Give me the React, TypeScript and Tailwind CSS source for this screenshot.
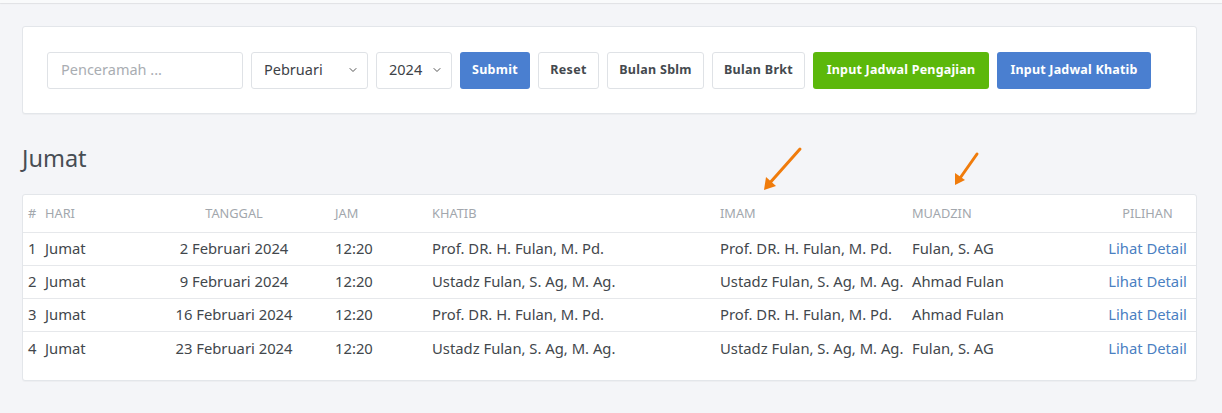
import { ChevronDown } from "lucide-react";

const rows = [
  { no: 1, tgl: "2 Februari 2024", khatib: "Prof. DR. H. Fulan, M. Pd.", imam: "Prof. DR. H. Fulan, M. Pd.", muadzin: "Fulan, S. AG" },
  { no: 2, tgl: "9 Februari 2024", khatib: "Ustadz Fulan, S. Ag, M. Ag.", imam: "Ustadz Fulan, S. Ag, M. Ag.", muadzin: "Ahmad Fulan" },
  { no: 3, tgl: "16 Februari 2024", khatib: "Prof. DR. H. Fulan, M. Pd.", imam: "Prof. DR. H. Fulan, M. Pd.", muadzin: "Ahmad Fulan" },
  { no: 4, tgl: "23 Februari 2024", khatib: "Ustadz Fulan, S. Ag, M. Ag.", imam: "Ustadz Fulan, S. Ag, M. Ag.", muadzin: "Fulan, S. AG" },
];

function Select({ value, width }: { value: string; width: string }) {
  return (
    <div className={`flex h-[37px] items-center justify-between rounded-[3px] border border-[#dfe2e6] bg-white pl-[12px] pr-[8px] text-[14.5px] text-[#3d4247] ${width}`}>
      <span>{value}</span>
      <ChevronDown className="h-[12px] w-[12px] text-[#555]" strokeWidth={2} />
    </div>
  );
}

export default function App() {
  return (
    <div className="relative min-h-[413px] bg-[#f4f5f8] font-['Noto_Sans',sans-serif]">
      <div className="h-[3px] bg-[#f9fafb] shadow-[0_1px_1px_rgba(0,0,0,0.08)]" />

      <div className="pl-[22px] pr-[25px] pt-[23px]">
        {/* filter */}
        <div className="flex h-[88px] items-center gap-[8px] rounded-[3px] border border-[#e3e6ea] bg-white px-[24px] shadow-[0_1px_1px_rgba(0,0,0,0.03)]">
          <div className="flex h-[37px] w-[196px] items-center rounded-[3px] border border-[#dfe2e6] px-[13px] text-[14.5px] text-[#a9adb2]">
            Penceramah ...
          </div>
          <Select value="Pebruari" width="w-[117px]" />
          <Select value="2024" width="w-[76px]" />
          <button className="h-[37px] w-[70px] rounded-[3px] bg-[#4a7fd0] text-[12.5px] font-bold tracking-[0.3px] text-white">
            Submit
          </button>
          <button className="h-[37px] w-[61px] rounded-[3px] border border-[#dfe2e6] bg-white text-[12.5px] font-bold tracking-[0.3px] text-[#44494e]">
            Reset
          </button>
          <button className="h-[37px] w-[97px] rounded-[3px] border border-[#dfe2e6] bg-white text-[12.5px] font-bold tracking-[0.3px] text-[#44494e]">
            Bulan Sblm
          </button>
          <button className="h-[37px] w-[93px] rounded-[3px] border border-[#dfe2e6] bg-white text-[12.5px] font-bold tracking-[0.3px] text-[#44494e]">
            Bulan Brkt
          </button>
          <button className="h-[37px] w-[176px] rounded-[3px] bg-[#5cb80b] text-[12.5px] font-bold tracking-[0.2px] text-white">
            Input Jadwal Pengajian
          </button>
          <button className="h-[37px] w-[154px] rounded-[3px] bg-[#4a7fd0] text-[12.5px] font-bold tracking-[0.2px] text-white">
            Input Jadwal Khatib
          </button>
        </div>

        <h2 className="mt-[29px] text-[23.5px] leading-[30px] text-[#474d54]">Jumat</h2>

        {/* table */}
        <div className="mt-[21px] rounded-[3px] border border-[#e3e6ea] bg-white pb-[16px] shadow-[0_1px_1px_rgba(0,0,0,0.03)]">
          <table className="w-full table-fixed border-collapse text-[14.8px] text-[#42474c]">
            <colgroup>
              <col className="w-[16px]" />
              <col className="w-[100px]" />
              <col className="w-[190px]" />
              <col className="w-[97px]" />
              <col className="w-[288px]" />
              <col className="w-[192px]" />
              <col className="w-[193px]" />
              <col />
            </colgroup>
            <thead>
              <tr className="h-[37px] border-b border-[#e6e8eb] text-left text-[12.8px] uppercase text-[#a2a7ad]">
                <th className="pl-[5px] font-normal">#</th>
                <th className="pl-[6px] font-normal">Hari</th>
                <th className="text-center font-normal">Tanggal</th>
                <th className="pl-[6px] font-normal">Jam</th>
                <th className="pl-[6px] font-normal">Khatib</th>
                <th className="pl-[6px] font-normal">Imam</th>
                <th className="pl-[6px] font-normal">Muadzin</th>
                <th className="text-center font-normal">Pilihan</th>
              </tr>
            </thead>
            <tbody>
              {rows.map((r, i) => (
                <tr
                  key={r.no}
                  className={`h-[33px] ${i < rows.length - 1 ? "border-b border-[#e6e8eb]" : ""}`}
                >
                  <td className="pl-[5px]">{r.no}</td>
                  <td className="pl-[6px]">Jumat</td>
                  <td className="text-center">{r.tgl}</td>
                  <td className="pl-[6px]">12:20</td>
                  <td className="pl-[6px]">{r.khatib}</td>
                  <td className="whitespace-nowrap pl-[6px]">{r.imam}</td>
                  <td className="pl-[6px]">{r.muadzin}</td>
                  <td className="whitespace-nowrap text-center text-[#4a80c2]">Lihat Detail</td>
                </tr>
              ))}
            </tbody>
          </table>
        </div>
      </div>

      {/* annotation arrows */}
      <svg className="pointer-events-none absolute left-0 top-0" width="1222" height="413">
        <g stroke="#f07c0c" strokeWidth="3" strokeLinecap="round" fill="none">
          <line x1="800" y1="149" x2="768" y2="185" />
          <line x1="977" y1="154" x2="958" y2="181" />
        </g>
        <g fill="#f07c0c">
          <polygon points="764,190 766,177 776,186" />
          <polygon points="955,185 955,173 965,180" />
        </g>
      </svg>
    </div>
  );
}
